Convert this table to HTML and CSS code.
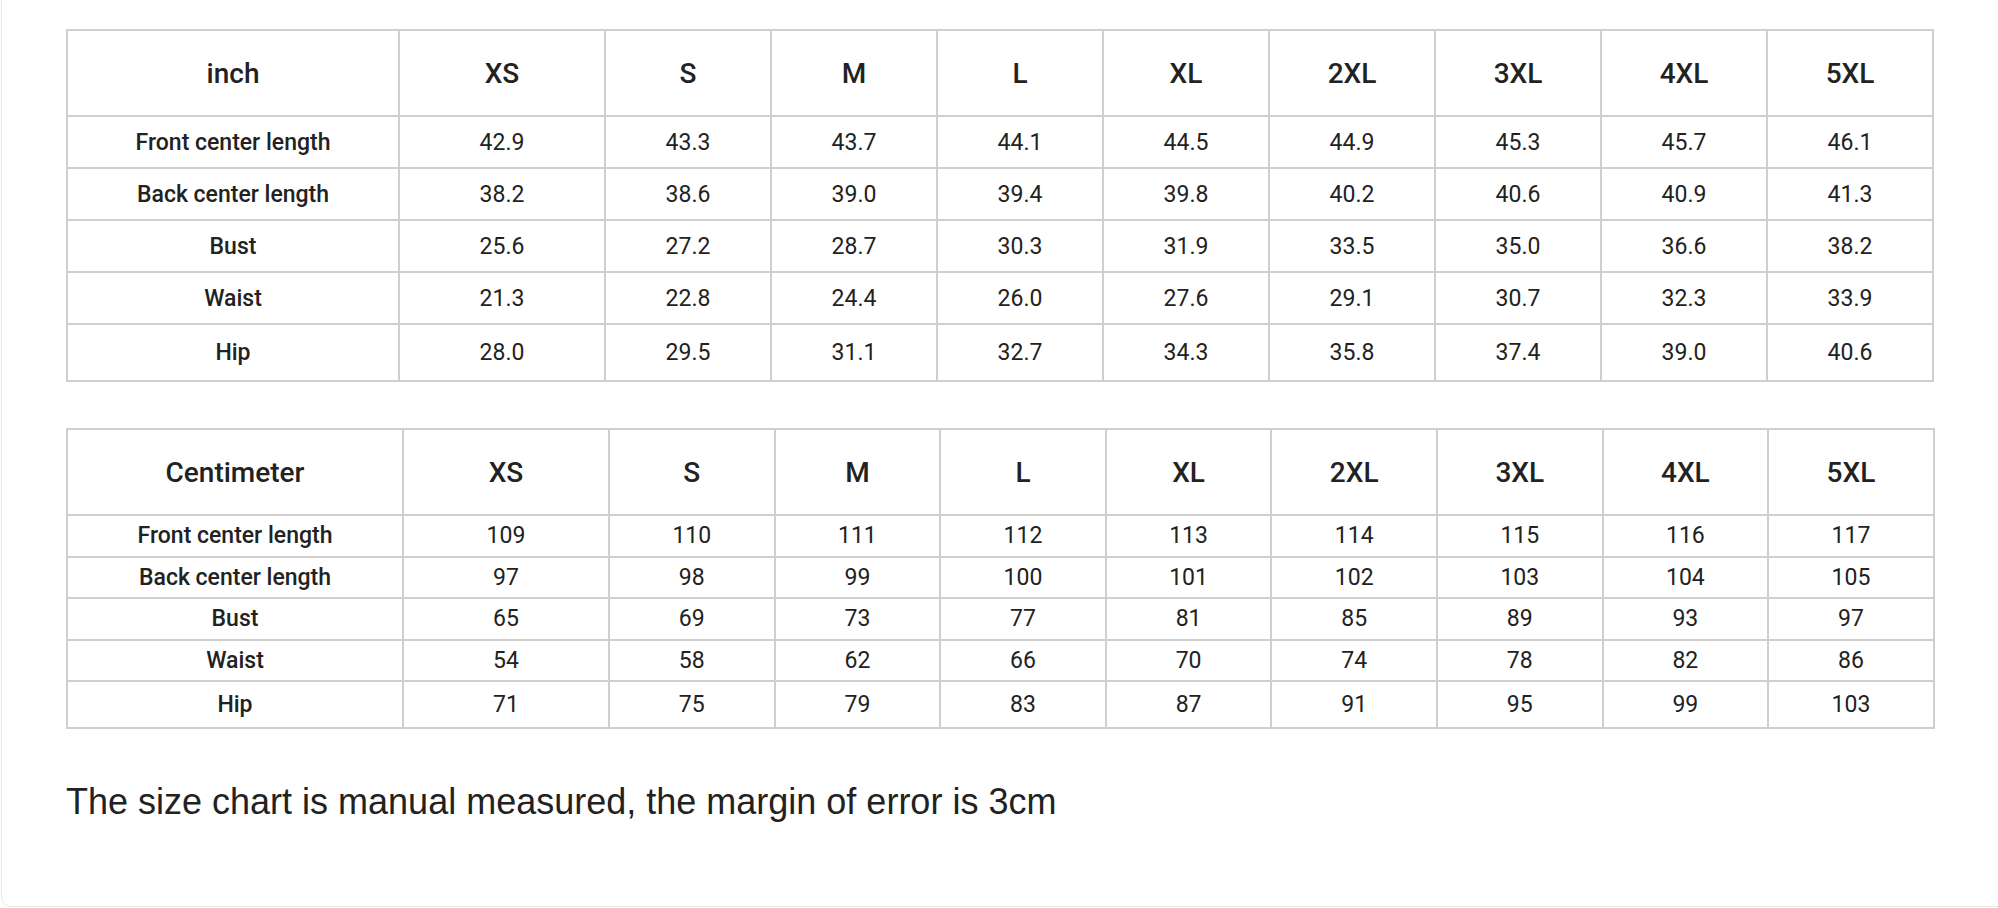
FILE: index.html
```html
<!DOCTYPE html>
<html lang="en">
<head>
<meta charset="utf-8">
<title>Size chart</title>
<link rel="stylesheet" href="styles.css">
</head>
<body>
<div class="card">
  <table class="chart chart-inch">
    <colgroup>
      <col class="c-label"><col class="c-xs"><col class="c-sz"><col class="c-sz"><col class="c-sz"><col class="c-sz"><col class="c-sz"><col class="c-sz"><col class="c-sz"><col class="c-sz">
    </colgroup>
    <thead>
      <tr><th>inch</th><th>XS</th><th>S</th><th>M</th><th>L</th><th>XL</th><th>2XL</th><th>3XL</th><th>4XL</th><th>5XL</th></tr>
    </thead>
    <tbody>
      <tr><th>Front center length</th><td>42.9</td><td>43.3</td><td>43.7</td><td>44.1</td><td>44.5</td><td>44.9</td><td>45.3</td><td>45.7</td><td>46.1</td></tr>
      <tr><th>Back center length</th><td>38.2</td><td>38.6</td><td>39.0</td><td>39.4</td><td>39.8</td><td>40.2</td><td>40.6</td><td>40.9</td><td>41.3</td></tr>
      <tr><th>Bust</th><td>25.6</td><td>27.2</td><td>28.7</td><td>30.3</td><td>31.9</td><td>33.5</td><td>35.0</td><td>36.6</td><td>38.2</td></tr>
      <tr><th>Waist</th><td>21.3</td><td>22.8</td><td>24.4</td><td>26.0</td><td>27.6</td><td>29.1</td><td>30.7</td><td>32.3</td><td>33.9</td></tr>
      <tr class="last"><th>Hip</th><td>28.0</td><td>29.5</td><td>31.1</td><td>32.7</td><td>34.3</td><td>35.8</td><td>37.4</td><td>39.0</td><td>40.6</td></tr>
    </tbody>
  </table>

  <table class="chart chart-cm">
    <colgroup>
      <col class="c-label"><col class="c-xs"><col class="c-sz"><col class="c-sz"><col class="c-sz"><col class="c-sz"><col class="c-sz"><col class="c-sz"><col class="c-sz"><col class="c-sz">
    </colgroup>
    <thead>
      <tr><th>Centimeter</th><th>XS</th><th>S</th><th>M</th><th>L</th><th>XL</th><th>2XL</th><th>3XL</th><th>4XL</th><th>5XL</th></tr>
    </thead>
    <tbody>
      <tr><th>Front center length</th><td>109</td><td>110</td><td>111</td><td>112</td><td>113</td><td>114</td><td>115</td><td>116</td><td>117</td></tr>
      <tr><th>Back center length</th><td>97</td><td>98</td><td>99</td><td>100</td><td>101</td><td>102</td><td>103</td><td>104</td><td>105</td></tr>
      <tr><th>Bust</th><td>65</td><td>69</td><td>73</td><td>77</td><td>81</td><td>85</td><td>89</td><td>93</td><td>97</td></tr>
      <tr><th>Waist</th><td>54</td><td>58</td><td>62</td><td>66</td><td>70</td><td>74</td><td>78</td><td>82</td><td>86</td></tr>
      <tr class="last"><th>Hip</th><td>71</td><td>75</td><td>79</td><td>83</td><td>87</td><td>91</td><td>95</td><td>99</td><td>103</td></tr>
    </tbody>
  </table>

  <p class="note">The size chart is manual measured, the margin of error is 3cm</p>
</div>
</body>
</html>
```

FILE: styles.css
```css
html, body {
  margin: 0;
  padding: 0;
  background: #ffffff;
  overflow: hidden;
}

.card {
  box-sizing: border-box;
  height: 919px;
  margin: -12px -14px 0 1px;
  padding: 40px 0 0 64px;
  border: 1px solid #e9e9e9;
  border-radius: 10px;
  background: #ffffff;
}

.chart {
  border-collapse: collapse;
  table-layout: fixed;
  width: 1867px;
  font-family: Roboto, "Liberation Sans", sans-serif;
  color: #222222;
  text-align: center;
}

.chart th,
.chart td {
  border: 2px solid #cfcfcf;
  padding: 0;
  text-align: center;
  vertical-align: middle;
}

.chart thead th {
  font-size: 28px;
  font-weight: 500;
}

.chart tbody th {
  font-size: 23px;
  font-weight: 500;
}

.chart tbody td {
  font-size: 23px;
  font-weight: 400;
}

.chart-inch .c-label { width: 332px; }
.chart-cm .c-label { width: 336px; }
.c-xs { width: 206px; }
.c-sz { width: 166px; }
.chart-cm .c-sz { width: 165.6px; }

.chart-inch thead tr { height: 86px; }
.chart-inch tbody tr { height: 52px; }
.chart-inch tbody tr.last { height: 57px; }

.chart-cm { margin-top: 46px; }
.chart-cm thead tr { height: 86px; }
.chart-cm tbody tr { height: 41.5px; }
.chart-cm tbody tr.last { height: 46.5px; }

.note {
  margin: 52px 0 0 0;
  font-family: "Liberation Sans", Arial, sans-serif;
  font-size: 36px;
  line-height: 42px;
  color: #222222;
}
```
